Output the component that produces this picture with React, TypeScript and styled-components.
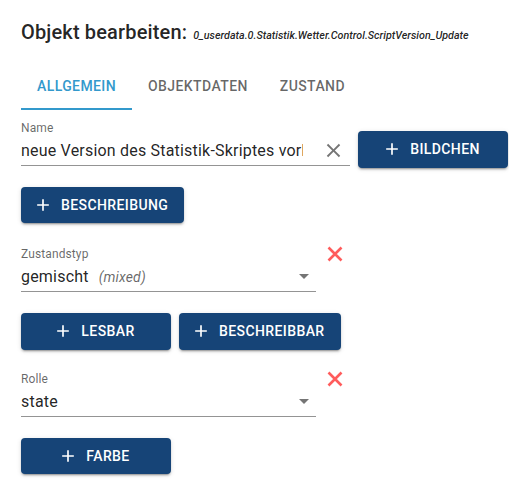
import React from "react";
import styled, { createGlobalStyle } from "styled-components";

const GlobalStyle = createGlobalStyle`
  html, body {
    margin: 0;
    padding: 0;
    background: #ffffff;
    font-family: Roboto, "Liberation Sans", Arial, sans-serif;
    -webkit-font-smoothing: antialiased;
  }
  * { box-sizing: border-box; }
`;

const Page = styled.div`
  width: 509px;
  height: 487px;
  padding: 16px 0 0 21px;
  overflow: hidden;
  color: rgba(0, 0, 0, 0.87);
`;

const Title = styled.h2`
  display: flex;
  align-items: baseline;
  height: 32px;
  margin: 0;
  font-size: 20px;
  font-weight: 500;
  line-height: 32px;
  letter-spacing: 0.15px;
  white-space: nowrap;
  color: rgba(0, 0, 0, 0.87);
`;

const TitleId = styled.span`
  margin-left: 6px;
  font-size: 10.75px;
  font-style: italic;
  font-weight: 500;
  letter-spacing: 0;
`;

const TabBar = styled.div`
  display: flex;
  height: 48px;
  margin-top: 14px;
`;

const Tab = styled.div<{ $active?: boolean }>`
  display: flex;
  align-items: center;
  justify-content: center;
  padding: 12px 16px 10px;
  min-width: 90px;
  font-size: 14px;
  font-weight: 500;
  letter-spacing: 0.4px;
  text-transform: uppercase;
  color: ${(p) => (p.$active ? "#3399cc" : "rgba(0, 0, 0, 0.6)")};
  border-bottom: 2px solid ${(p) => (p.$active ? "#3399cc" : "transparent")};
`;

const Row = styled.div<{ $mt: number }>`
  display: flex;
  align-items: flex-start;
  margin-top: ${(p) => p.$mt}px;
`;

const Field = styled.div<{ $width: number }>`
  display: flex;
  flex-direction: column;
  width: ${(p) => p.$width}px;
  flex: none;
`;

const Label = styled.div`
  font-size: 12px;
  line-height: 14px;
  color: rgba(0, 0, 0, 0.6);
  letter-spacing: 0.11px;
`;

const InputRow = styled.div`
  position: relative;
  display: flex;
  align-items: flex-start;
  height: 31px;
  border-bottom: 1px solid rgba(0, 0, 0, 0.42);
`;

const InputText = styled.div`
  flex: 1;
  min-width: 0;
  overflow: hidden;
  white-space: nowrap;
  padding: 4px 0;
  font-size: 16px;
  line-height: 23px;
  letter-spacing: 0.2px;
  color: rgba(0, 0, 0, 0.87);
`;

const Hint = styled.span`
  margin-left: 10px;
  font-size: 14px;
  font-style: italic;
  letter-spacing: 0.15px;
  color: rgba(0, 0, 0, 0.6);
`;

const ClearIcon = styled.svg`
  flex: none;
  width: 23px;
  height: 23px;
  margin: 4px 5px 0 19px;
  fill: rgba(0, 0, 0, 0.54);
`;

const ArrowIcon = styled.svg`
  position: absolute;
  right: 0;
  top: 3px;
  width: 24px;
  height: 24px;
  fill: rgba(0, 0, 0, 0.54);
`;

const RemoveIcon = styled.svg`
  flex: none;
  width: 16px;
  height: 16px;
  margin: -1px 0 0 11px;
`;

const Button = styled.button<{ $ml?: number; $mt?: number }>`
  display: inline-flex;
  align-items: center;
  justify-content: center;
  flex: none;
  min-width: 150px;
  margin-left: ${(p) => p.$ml ?? 0}px;
  margin-top: ${(p) => p.$mt ?? 0}px;
  padding: 6px 16px;
  border: none;
  border-radius: 4px;
  background: #164477;
  color: #ffffff;
  font-family: Roboto, "Liberation Sans", Arial, sans-serif;
  font-size: 14px;
  font-weight: 500;
  line-height: 24.5px;
  letter-spacing: 0.4px;
  text-transform: uppercase;
  box-shadow: 0px 3px 1px -2px rgba(0, 0, 0, 0.2), 0px 2px 2px 0px rgba(0, 0, 0, 0.14),
    0px 1px 5px 0px rgba(0, 0, 0, 0.12);
  cursor: pointer;
`;

const PlusIcon = styled.svg`
  width: 20px;
  height: 20px;
  margin: 0 8px 0 -4px;
  fill: currentColor;
`;

const Plus = () => (
  <PlusIcon viewBox="0 0 24 24">
    <path d="M19 13h-6v6h-2v-6H5v-2h6V5h2v6h6v2z" />
  </PlusIcon>
);

const AddButton: React.FC<{ label: string; ml?: number; mt?: number }> = ({ label, ml, mt }) => (
  <Button $ml={ml} $mt={mt}>
    <Plus />
    {label}
  </Button>
);

const Remove = () => (
  <RemoveIcon viewBox="0 0 16 16">
    <path d="M1.5 1.5 L14.5 14.5 M14.5 1.5 L1.5 14.5" stroke="#ff5c5c" strokeWidth="2.6" fill="none" />
  </RemoveIcon>
);

const Arrow = () => (
  <ArrowIcon viewBox="0 0 24 24">
    <path d="M7 10l5 5 5-5z" />
  </ArrowIcon>
);

export default function App() {
  return (
    <>
      <GlobalStyle />
      <Page>
        <Title>
          Objekt bearbeiten:
          <TitleId>0_userdata.0.Statistik.Wetter.Control.ScriptVersion_Update</TitleId>
        </Title>

        <TabBar>
          <Tab $active>Allgemein</Tab>
          <Tab>Objektdaten</Tab>
          <Tab>Zustand</Tab>
        </TabBar>

        <Row $mt={11}>
          <Field $width={329}>
            <Label>Name</Label>
            <InputRow>
              <InputText>neue Version des Statistik-Skriptes vorhanden</InputText>
              <ClearIcon viewBox="0 0 24 24">
                <path d="M19 6.41 17.59 5 12 10.59 6.41 5 5 6.41 10.59 12 5 17.59 6.41 19 12 13.41 17.59 19 19 17.59 13.41 12z" />
              </ClearIcon>
            </InputRow>
          </Field>
          <AddButton label="Bildchen" ml={8} mt={10} />
        </Row>

        <Row $mt={19}>
          <AddButton label="Beschreibung" />
        </Row>

        <Row $mt={24}>
          <Field $width={295}>
            <Label>Zustandstyp</Label>
            <InputRow>
              <InputText>
                gemischt<Hint>(mixed)</Hint>
              </InputText>
              <Arrow />
            </InputRow>
          </Field>
          <Remove />
        </Row>

        <Row $mt={21}>
          <AddButton label="Lesbar" />
          <AddButton label="Beschreibbar" ml={8} />
        </Row>

        <Row $mt={22}>
          <Field $width={295}>
            <Label>Rolle</Label>
            <InputRow>
              <InputText>state</InputText>
              <Arrow />
            </InputRow>
          </Field>
          <Remove />
        </Row>

        <Row $mt={21}>
          <AddButton label="Farbe" />
        </Row>
      </Page>
    </>
  );
}
